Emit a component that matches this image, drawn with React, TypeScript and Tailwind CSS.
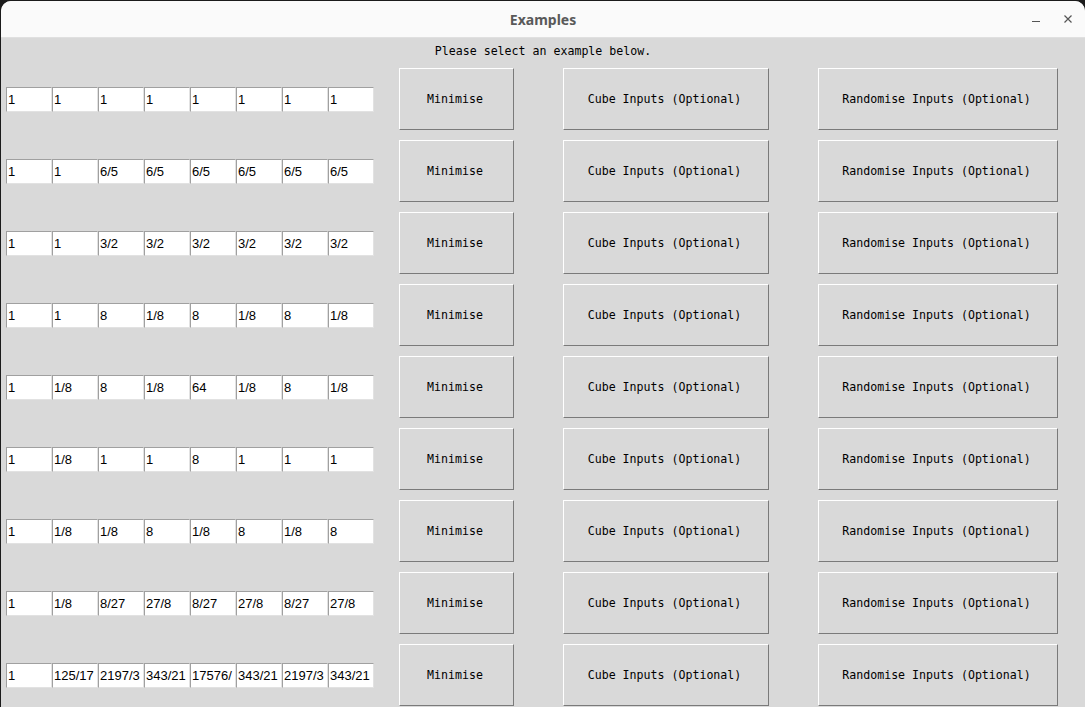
const rows: string[][] = [
  ["1", "1", "1", "1", "1", "1", "1", "1"],
  ["1", "1", "6/5", "6/5", "6/5", "6/5", "6/5", "6/5"],
  ["1", "1", "3/2", "3/2", "3/2", "3/2", "3/2", "3/2"],
  ["1", "1", "8", "1/8", "8", "1/8", "8", "1/8"],
  ["1", "1/8", "8", "1/8", "64", "1/8", "8", "1/8"],
  ["1", "1/8", "1", "1", "8", "1", "1", "1"],
  ["1", "1/8", "1/8", "8", "1/8", "8", "1/8", "8"],
  ["1", "1/8", "8/27", "27/8", "8/27", "27/8", "8/27", "27/8"],
  ["1", "125/17", "2197/3", "343/21", "17576/", "343/21", "2197/3", "343/21"],
];

const mono = "font-['DejaVu_Sans_Mono',monospace] text-[11.6px] text-black";

function TkButton({ label, className }: { label: string; className: string }) {
  return (
    <div
      className={`${className} h-[62px] pt-[2px] pr-[3px] flex items-center justify-center bg-[#d9d9d9] border-t border-l border-white border-r border-b border-r-[#7a7a7a] border-b-[#7a7a7a] ${mono}`}
    >
      {label}
    </div>
  );
}

export default function App() {
  return (
    <div className="w-[1085px] h-[707px] bg-[#1b1b1b] overflow-hidden pt-[1px] pl-[1px]">
      <div className="h-[706px] bg-[#d9d9d9] rounded-t-[10px] overflow-hidden">
        {/* title bar */}
        <div className="relative h-[37px] bg-[#fafafa] border-b border-[#e0e0e0] flex items-center justify-center">
          <span className="font-['Noto_Sans',sans-serif] font-bold text-[14px] text-[#595959]">Examples</span>
          <div className="absolute right-[12px] top-0 h-full flex items-center gap-[22px]">
            <svg width="10" height="10" viewBox="0 0 10 10">
              <path d="M1 7.5h8" stroke="#555" strokeWidth="1.2" />
            </svg>
            <svg width="10" height="10" viewBox="0 0 10 10">
              <path d="M1.5 1.5l7 7M8.5 1.5l-7 7" stroke="#555" strokeWidth="1.2" />
            </svg>
          </div>
        </div>

        <div className={`h-[30px] pt-[6px] leading-[14px] text-center ${mono}`}>Please select an example below.</div>

        {rows.map((r, i) => (
          <div key={i} className="flex items-center h-[62px] mb-[10px]">
            <div className="flex ml-[5px]">
              {r.map((v, j) => (
                <div
                  key={j}
                  className="w-[46px] h-[25px] bg-white border-t border-l border-[#a0a0a0] border-r border-b border-r-[#e2e2e2] border-b-[#e2e2e2] pl-[1px] overflow-hidden whitespace-nowrap font-['Liberation_Sans',sans-serif] text-[13px] leading-[23px] text-black"
                >
                  {v}
                </div>
              ))}
            </div>
            <TkButton label="Minimise" className="ml-[25px] w-[115px]" />
            <TkButton label="Cube Inputs (Optional)" className="ml-[49px] w-[206px]" />
            <TkButton label="Randomise Inputs (Optional)" className="ml-[49px] w-[240px]" />
          </div>
        ))}
      </div>
    </div>
  );
}
